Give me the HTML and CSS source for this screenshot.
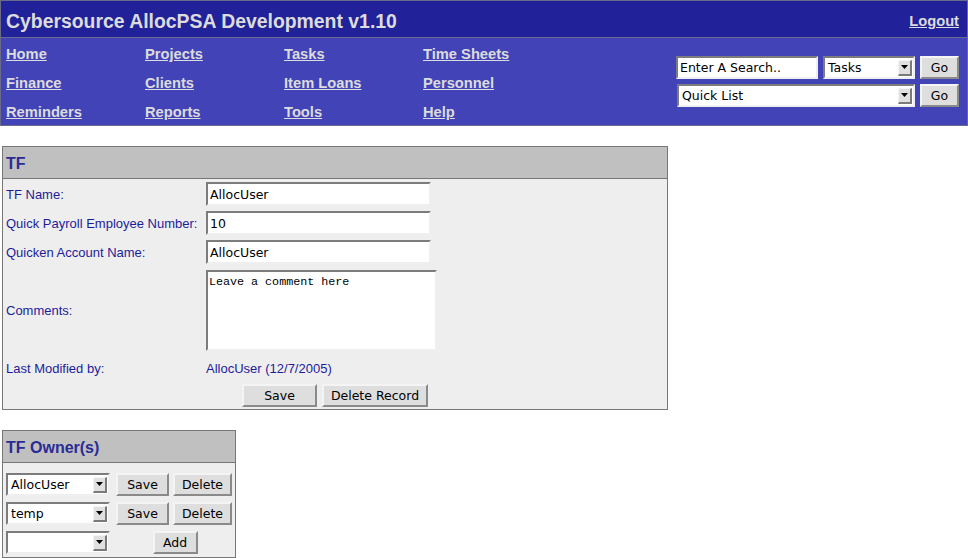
FILE: index.html
```html
<!DOCTYPE html>
<html>
<head>
<meta charset="utf-8">
<title>AllocPSA</title>
<link rel="stylesheet" href="styles.css">
</head>
<body>
<div class="header">
  <div class="titlebar">
    <span class="title">Cybersource AllocPSA Development v1.10</span>
    <a class="logout" href="#">Logout</a>
  </div>
  <div class="navbar">
    <div class="nav">
      <a href="#">Home</a><a href="#">Projects</a><a href="#">Tasks</a><a href="#">Time Sheets</a>
      <a href="#">Finance</a><a href="#">Clients</a><a href="#">Item Loans</a><a href="#">Personnel</a>
      <a href="#">Reminders</a><a href="#">Reports</a><a href="#">Tools</a><a href="#">Help</a>
    </div>
    <div class="search">
      <div class="srow">
        <input class="field search-input" type="text" value="Enter A Search..">
        <div class="select sel-tasks"><span class="sel-text">Tasks</span><span class="sel-arrow"><svg width="7" height="4" viewBox="0 0 7 4"><path d="M0 0H7L3.5 4Z" fill="#000"/></svg></span></div>
        <button class="btn go">Go</button>
      </div>
      <div class="srow">
        <div class="select sel-quick"><span class="sel-text">Quick List</span><span class="sel-arrow"><svg width="7" height="4" viewBox="0 0 7 4"><path d="M0 0H7L3.5 4Z" fill="#000"/></svg></span></div>
        <button class="btn go">Go</button>
      </div>
    </div>
  </div>
</div>

<div class="panel panel-tf">
  <div class="panel-head">TF</div>
  <div class="panel-body">
    <div class="row"><span class="label">TF Name:</span><input class="field text-input" type="text" value="AllocUser"></div>
    <div class="row"><span class="label">Quick Payroll Employee Number:</span><input class="field text-input" type="text" value="10"></div>
    <div class="row"><span class="label">Quicken Account Name:</span><input class="field text-input" type="text" value="AllocUser"></div>
    <div class="row row-comments"><span class="label">Comments:</span><textarea class="field comments">Leave a comment here</textarea></div>
    <div class="row row-mod"><span class="label">Last Modified by:</span><span class="value">AllocUser (12/7/2005)</span></div>
    <div class="actions"><button class="btn save">Save</button><button class="btn delrec">Delete Record</button></div>
  </div>
</div>

<div class="panel panel-owners">
  <div class="panel-head">TF Owner(s)</div>
  <div class="owners">
    <div class="select sel-owner"><span class="sel-text">AllocUser</span><span class="sel-arrow"><svg width="7" height="4" viewBox="0 0 7 4"><path d="M0 0H7L3.5 4Z" fill="#000"/></svg></span></div>
    <button class="btn osave">Save</button>
    <button class="btn odel">Delete</button>
    <div class="select sel-owner"><span class="sel-text">temp</span><span class="sel-arrow"><svg width="7" height="4" viewBox="0 0 7 4"><path d="M0 0H7L3.5 4Z" fill="#000"/></svg></span></div>
    <button class="btn osave">Save</button>
    <button class="btn odel">Delete</button>
    <div class="select sel-owner"><span class="sel-text"></span><span class="sel-arrow"><svg width="7" height="4" viewBox="0 0 7 4"><path d="M0 0H7L3.5 4Z" fill="#000"/></svg></span></div>
    <div class="add-cell"><button class="btn add">Add</button></div>
  </div>
</div>
</body>
</html>
```

FILE: styles.css
```css
body {
  margin: 0;
  background: #ffffff;
  font-family: "Liberation Sans", Arial, sans-serif;
  font-size: 13px;
}

.header {
  border: 1px solid #6a6a8a;
  width: 966px;
}

.titlebar {
  height: 36px;
  background: #21219a;
  border-bottom: 1px solid #6a6a8a;
  display: flex;
  align-items: center;
  justify-content: space-between;
  padding: 0 7px 0 5px;
}

.title {
  color: #dcdcdc;
  font-weight: bold;
  font-size: 19.4px;
  margin-top: 4px;
}

.logout {
  color: #dcdcdc;
  font-weight: bold;
  font-size: 14.7px;
  margin-top: 4px;
  margin-right: 1px;
}

.navbar {
  height: 87px;
  background: #4343b8;
  display: flex;
  justify-content: space-between;
}

.nav {
  display: grid;
  grid-template-columns: repeat(4, 139px);
  grid-auto-rows: 29px;
  padding: 2px 0 0 5px;
}

.nav a {
  color: #dcdcdc;
  font-weight: bold;
  font-size: 14.7px;
  line-height: 29px;
  justify-self: start;
}

.search {
  display: flex;
  flex-direction: column;
  align-items: flex-end;
  gap: 5px;
  padding: 18px 8px 0 0;
}

.srow {
  display: flex;
  gap: 5px;
}

.field {
  box-sizing: border-box;
  background: #ffffff;
  border-style: solid;
  border-width: 2px;
  border-color: #7c7c7c #efefef #efefef #7c7c7c;
  font-family: "DejaVu Sans", sans-serif;
  font-size: 12.5px;
  color: #000;
  padding: 0 1px 0 2px;
  margin: 0;
  outline: none;
}

.search-input {
  width: 142px;
  height: 23px;
}

.select {
  box-sizing: border-box;
  height: 23px;
  background: #ffffff;
  border-style: solid;
  border-width: 2px;
  border-color: #7c7c7c #efefef #efefef #7c7c7c;
  display: flex;
  align-items: center;
  justify-content: space-between;
  font-family: "DejaVu Sans", sans-serif;
  font-size: 12.5px;
  padding: 0 1px 0 3px;
}

.sel-arrow {
  box-sizing: border-box;
  width: 14px;
  height: 16px;
  background: #e0e0e0;
  border-style: solid;
  border-width: 1px 2px 2px 1px;
  border-color: #f4f4f4 #7a7a7a #7a7a7a #f4f4f4;
  display: flex;
  align-items: center;
  justify-content: center;
}

.sel-tasks { width: 92px; }
.sel-quick { width: 238px; }

.btn {
  box-sizing: border-box;
  height: 23px;
  background: #dedede;
  border-style: solid;
  border-width: 2px;
  border-color: #f4f4f4 #8a8a8a #8a8a8a #f4f4f4;
  font-family: "DejaVu Sans", sans-serif;
  font-size: 12.5px;
  color: #000;
  padding: 0;
  margin: 0;
}

.go { width: 39px; }

.panel {
  margin-left: 2px;
  border: 1px solid #777777;
  background: #eeeeee;
  box-sizing: border-box;
}

.panel-tf {
  margin-top: 20px;
  width: 666px;
}

.panel-head {
  height: 31px;
  background: #c0c0c0;
  border-bottom: 1px solid #777777;
  color: #2b2b96;
  font-weight: bold;
  font-size: 16px;
  line-height: 33px;
  padding-left: 3px;
}

.panel-body {
  padding: 3px 0 2px 3px;
}

.row {
  display: flex;
  align-items: center;
  margin-bottom: 5px;
}

.label {
  width: 200px;
  flex: none;
  color: #1d1d9a;
}

.value {
  color: #1d1d9a;
}

.text-input {
  width: 225px;
  height: 24px;
}

.row-comments {
  margin-top: 6px;
}

.comments {
  width: 231px;
  height: 81px;
  resize: none;
  font-family: "Liberation Mono", "Courier New", monospace;
  font-size: 11.7px;
  padding: 3px 1px 2px 1px;
}

.row-mod {
  height: 24px;
  margin-bottom: 4px;
}

.actions {
  display: flex;
  justify-content: center;
  gap: 5px;
  padding-right: 3px;
}

.save { width: 75px; }
.delrec { width: 106px; }

.panel-owners {
  margin-top: 20px;
  width: 234px;
}

.owners {
  display: grid;
  grid-template-columns: 104px 53px 59px;
  column-gap: 6px;
  row-gap: 6px;
  padding: 10px 0 3px 3px;
  align-items: center;
}

.osave { width: 53px; }
.odel { width: 59px; margin-left: -2px; }

.add-cell {
  grid-column: 2 / 4;
  display: flex;
  justify-content: center;
}

.add { width: 45px; }
```
